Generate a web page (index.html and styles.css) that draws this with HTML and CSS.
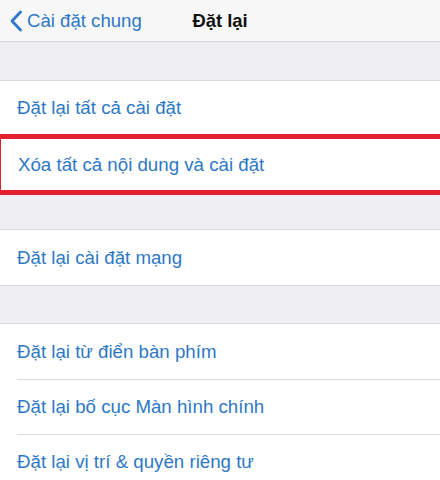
FILE: index.html
```html
<!DOCTYPE html>
<html lang="vi">

<head>
    <meta charset="UTF-8">
    <meta name="viewport" content="width=device-width, initial-scale=1.0">
    <title>Đặt lại</title>
    <link rel="stylesheet" href="styles.css">
</head>

<body>
    <div class="navbar">
        <a class="back" href="#">
            <svg class="chevron" width="14" height="22" viewBox="0 0 14 22">
                <path d="M11.5 2 L3 11 L11.5 20" fill="none" stroke="currentColor" stroke-width="2.8" stroke-linecap="round" stroke-linejoin="round"/>
            </svg>
            <span>Cài đặt chung</span>
        </a>
        <div class="title">Đặt lại</div>
    </div>

    <div class="gap"></div>
    <div class="group">
        <div class="row top">Đặt lại tất cả cài đặt</div>
        <div class="row highlight">Xóa tất cả nội dung và cài đặt</div>
    </div>

    <div class="gap short"></div>
    <div class="group">
        <div class="row">Đặt lại cài đặt mạng</div>
    </div>

    <div class="gap last"></div>
    <div class="group">
        <div class="row">Đặt lại từ điển bàn phím</div>
        <div class="row">Đặt lại bố cục Màn hình chính</div>
        <div class="row">Đặt lại vị trí &amp; quyền riêng tư</div>
    </div>
</body>

</html>
```

FILE: styles.css
```css
/* Global Styles */
body {
    font-family: 'Liberation Sans', Arial, sans-serif;
    background-color: #eeeef3;
    margin: 0;
    padding: 0;
}

/* Navigation bar */
.navbar {
    position: relative;
    height: 41px;
    background: #f7f7f8;
    border-bottom: 1px solid #d3d3d8;
    display: flex;
    align-items: center;
}

.back {
    display: flex;
    align-items: center;
    gap: 4px;
    padding-left: 9px;
    color: #2d78c6;
    text-decoration: none;
    font-size: 18.6px;
}

.back .chevron {
    display: block;
}

.title {
    position: absolute;
    left: 0;
    right: 0;
    text-align: center;
    font-size: 18.4px;
    font-weight: 700;
    color: #111;
    pointer-events: none;
}

/* Gaps between groups */
.gap {
    height: 38px;
}

.gap.short {
    height: 34px;
}

.gap.last {
    height: 37px;
}

/* Table groups */
.group {
    background: #ffffff;
    border-top: 1px solid #d9d9de;
    border-bottom: 1px solid #d9d9de;
}

.row {
    position: relative;
    height: 55px;
    padding-left: 17px;
    display: flex;
    align-items: center;
    color: #2d78c6;
    font-size: 18.7px;
}

.row + .row::before {
    content: "";
    position: absolute;
    top: 0;
    left: 17px;
    right: 0;
    border-top: 1px solid #dcdce0;
}

.row.top {
    height: 53px;
}

.row.highlight {
    height: 51px;
    border-top: 5px solid #e3202f;
    border-bottom: 5px solid #e3202f;
    border-left: 1px solid #e3202f;
    margin-bottom: -1px;
}

.row.highlight::before {
    display: none;
}
```
